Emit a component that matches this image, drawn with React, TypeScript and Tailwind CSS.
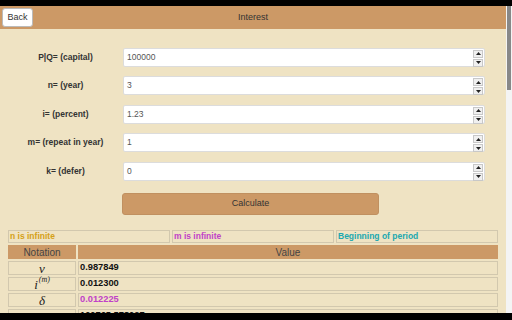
import React from "react";

const font = { fontFamily: '"Liberation Sans", Arial, sans-serif' };

function Spinner() {
  return (
    <div className="absolute right-[1px] top-[1px] flex flex-col gap-[1px]">
      <div className="w-[10px] h-[8px] bg-[#f0f0f0] border border-[#c8c8c8] flex items-center justify-center">
        <svg width="5" height="3" viewBox="0 0 5 3"><path d="M2.5 0 L5 3 L0 3 Z" fill="#222" /></svg>
      </div>
      <div className="w-[10px] h-[8px] bg-[#f0f0f0] border border-[#c8c8c8] flex items-center justify-center">
        <svg width="5" height="3" viewBox="0 0 5 3"><path d="M0 0 L5 0 L2.5 3 Z" fill="#222" /></svg>
      </div>
    </div>
  );
}

function Row({ label, value }: { label: string; value: string }) {
  return (
    <div className="flex items-center h-[28.5px] shrink-0">
      <div className="w-[115px] ml-[8px] text-center text-[8.5px] font-bold text-[#333]">{label}</div>
      <div className="relative w-[362px] h-[19px] bg-white border border-[#dcdcdc] rounded-[2px] flex items-center pl-[3px] text-[8.5px] text-[#555]">
        {value}
        <Spinner />
      </div>
    </div>
  );
}

export default function App() {
  const rows = [
    ["P|Q= (capital)", "100000"],
    ["n= (year)", "3"],
    ["i= (percent)", "1.23"],
    ["m= (repeat in year)", "1"],
    ["k= (defer)", "0"],
  ];
  const data: [React.ReactNode, string, string][] = [
    [<span>ν</span>, "0.987849", "#111"],
    [
      <span className="relative">
        i
        <span className="absolute left-full -top-[2px] text-[8px] ml-[1px]">(m)</span>
      </span>,
      "0.012300",
      "#111",
    ],
    [<span>δ</span>, "0.012225", "#c040c8"],
    [<span>a</span>, "100765.578027", "#111"],
  ];
  return (
    <div className="w-[512px] h-[320px] overflow-hidden flex flex-col bg-black" style={font}>
      <div className="h-[6px] bg-black shrink-0" />
      <div className="flex-1 flex min-h-0">
        <div className="w-[506px] bg-[#efe3c3] flex flex-col overflow-hidden">
          <div className="h-[23px] shrink-0 bg-[#cc9966] relative flex items-center justify-center">
            <div className="absolute left-[2px] top-[2px] w-[31px] h-[19px] bg-white border border-[#bbb] rounded-[3px] flex items-center justify-center text-[9px] text-[#333]">
              Back
            </div>
            <span className="text-[9px] text-[#333]">Interest</span>
          </div>
          <div className="h-[14px] shrink-0" />
          {rows.map(([l, v]) => (
            <Row key={l} label={l} value={v} />
          ))}
          <div className="h-[7.5px] shrink-0" />
          <div className="ml-[122px] w-[257px] h-[22px] shrink-0 bg-[#cc9966] rounded-[3px] flex items-center justify-center text-[9px] text-[#333] border border-[#c09060]">
            Calculate
          </div>
          <div className="h-[15px] shrink-0" />
          <div className="ml-[8px] w-[490px] flex flex-col gap-[2px] shrink-0">
            <div className="flex gap-[2px] h-[13px] shrink-0">
              <div className="w-[162px] border border-[#d2c8ae] text-[8.5px] font-bold text-[#d4a017] flex items-center px-[1px]">n is infinite</div>
              <div className="w-[162px] border border-[#d2c8ae] text-[8.5px] font-bold text-[#c040c8] flex items-center px-[1px]">m is infinite</div>
              <div className="flex-1 border border-[#d2c8ae] text-[8.5px] font-bold text-[#20a8b0] flex items-center px-[1px]">Beginning of period</div>
            </div>
            <div className="flex gap-[2px] h-[14px] shrink-0">
              <div className="w-[68px] bg-[#cc9966] flex items-center justify-center text-[10px] text-[#444]">Notation</div>
              <div className="flex-1 bg-[#cc9966] flex items-center justify-center text-[10px] text-[#444]">Value</div>
            </div>
            {data.map(([n, v, c], i) => (
              <div key={i} className="flex gap-[2px] h-[14px] shrink-0">
                <div className={`w-[68px] border border-[#d2c8ae] flex items-center justify-center text-[13px] italic text-[#222] leading-none ${i === 1 ? "pr-[12px]" : ""}`} style={{ fontFamily: '"Liberation Serif", serif' }}>{n}</div>
                <div className="flex-1 border border-[#d2c8ae] flex items-center px-[1px] text-[9.3px] font-bold" style={{ color: c }}>{v}</div>
              </div>
            ))}
          </div>
        </div>
        <div className="w-[6px] bg-[#f4f4f4] relative">
          <div className="absolute left-[1px] top-0 w-[4px] h-[84px] bg-[#888]" />
        </div>
      </div>
      <div className="h-[7px] bg-black shrink-0" />
    </div>
  );
}
